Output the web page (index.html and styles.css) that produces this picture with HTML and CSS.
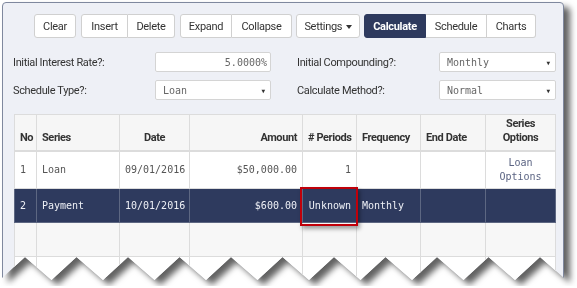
FILE: index.html
```html
<!DOCTYPE html>
<html>
<head>
<meta charset="utf-8">
<link rel="stylesheet" href="styles.css">
</head>
<body>
<div class="shot">
  <div class="panel">
    <div class="toolbar">
      <div class="group"><button class="btn w-clear">Clear</button></div>
      <div class="group"><button class="btn w-insert">Insert</button><button class="btn w-delete">Delete</button></div>
      <div class="group"><button class="btn w-expand">Expand</button><button class="btn w-collapse">Collapse</button></div>
      <div class="group"><button class="btn w-settings">Settings <span class="caret"></span></button></div>
      <div class="group"><button class="btn btn-primary w-calc">Calculate</button><button class="btn w-sched">Schedule</button><button class="btn w-charts">Charts</button></div>
    </div>

    <div class="form">
      <div class="field">
        <label class="label">Initial Interest Rate?:</label>
        <div class="input right">5.0000%</div>
      </div>
      <div class="field">
        <label class="label">Initial Compounding?:</label>
        <div class="input select wide">Monthly<span class="arrow">&#9660;</span></div>
      </div>
      <div class="field">
        <label class="label">Schedule Type?:</label>
        <div class="input select">Loan<span class="arrow">&#9660;</span></div>
      </div>
      <div class="field">
        <label class="label">Calculate Method?:</label>
        <div class="input select wide">Normal<span class="arrow">&#9660;</span></div>
      </div>
    </div>

    <table class="grid">
      <colgroup>
        <col class="c-no"><col class="c-series"><col class="c-date"><col class="c-amt">
        <col class="c-per"><col class="c-freq"><col class="c-end"><col class="c-opt">
      </colgroup>
      <thead>
        <tr>
          <th class="l">No</th>
          <th class="l">Series</th>
          <th class="c">Date</th>
          <th class="r">Amount</th>
          <th class="r"># Periods</th>
          <th class="l">Frequency</th>
          <th class="l">End Date</th>
          <th class="c">Series<br>Options</th>
        </tr>
      </thead>
      <tbody>
        <tr class="row-a row-first">
          <td class="l">1</td>
          <td class="l">Loan</td>
          <td class="c">09/01/2016</td>
          <td class="r">$50,000.00</td>
          <td class="r">1</td>
          <td></td>
          <td></td>
          <td class="c link">Loan<br>Options</td>
        </tr>
        <tr class="row-sel">
          <td class="l">2</td>
          <td class="l">Payment</td>
          <td class="c">10/01/2016</td>
          <td class="r">$600.00</td>
          <td class="r mark-cell">Unknown<span class="mark"></span></td>
          <td class="l">Monthly</td>
          <td></td>
          <td></td>
        </tr>
        <tr class="row-b"><td></td><td></td><td></td><td></td><td></td><td></td><td></td><td></td></tr>
        <tr class="row-a"><td></td><td></td><td></td><td></td><td></td><td></td><td></td><td></td></tr>
      </tbody>
    </table>
  </div>
</div>
</body>
</html>
```

FILE: styles.css
```css
html, body {
  margin: 0;
  padding: 0;
  background: #ffffff;
  overflow: hidden;
}

.shot {
  padding: 2px 0 0 2px;
  width: 562px;
  filter: drop-shadow(6px 5px 3px rgba(0, 0, 0, 0.62));
}

.panel {
  box-sizing: border-box;
  width: 562px;
  height: 284px;
  overflow: hidden;
  background: #eef0f6;
  border: 1px solid #7f889e;
  border-radius: 4px 4px 0 0;
  padding: 11px 7px 0 11px;
  font-family: Roboto, "Liberation Sans", sans-serif;
  font-size: 11px;
  color: #333;
  clip-path: polygon(0 0, 562px 0, 562px 276px, 538px 255px, 513px 278px, 486.5px 255px, 461.5px 278px, 435px 255px, 410px 278px, 383.5px 255px, 358.5px 278px, 332px 255px, 307px 278px, 280.5px 255px, 255.5px 278px, 229px 255px, 204px 278px, 177.5px 255px, 152.5px 278px, 126px 255px, 101px 278px, 74.5px 255px, 49.5px 278px, 23px 255px, 0 276px);
}

/* toolbar */
.toolbar {
  display: flex;
  gap: 5px;
  padding-left: 20px;
}
.toolbar .group:nth-child(4),
.toolbar .group:nth-child(5) {
  margin-left: -1px;
}
.group {
  display: flex;
}
.btn {
  box-sizing: border-box;
  height: 24px;
  padding: 0;
  margin: 0;
  background: #fff;
  border: 1px solid #d0d0d0;
  font-family: Roboto, "Liberation Sans", sans-serif;
  font-size: 11px;
  letter-spacing: -0.3px;
  color: #333;
  text-align: center;
}
.group .btn + .btn { border-left: none; }
.group .btn:first-child { border-radius: 3px 0 0 3px; }
.group .btn:last-child { border-radius: 0 3px 3px 0; }
.group .btn:only-child { border-radius: 3px; }

.w-clear { width: 42px; }
.w-insert { width: 47px; }
.w-delete { width: 47px; }
.w-expand { width: 52px; }
.w-collapse { width: 60px; }
.w-settings { width: 64px; }
.w-calc { width: 62px; }
.w-sched { width: 61px; }
.w-charts { width: 49px; }

.btn-primary {
  background: #2e3a5e;
  border-color: #2e3a5e;
  color: #fff;
  font-weight: bold;
}
.caret {
  display: inline-block;
  width: 0;
  height: 0;
  border-left: 3.5px solid transparent;
  border-right: 3.5px solid transparent;
  border-top: 4px solid #333;
  vertical-align: middle;
  margin-left: 1px;
}

/* form */
.form {
  display: grid;
  grid-template-columns: 258px 259px;
  column-gap: 26px;
  row-gap: 8px;
  margin-top: 14px;
  margin-left: -1px;
}
.field {
  display: flex;
  align-items: center;
  height: 20px;
}
.label {
  width: 142px;
  flex: none;
  letter-spacing: -0.35px;
  color: #333;
}
.input {
  box-sizing: border-box;
  position: relative;
  width: 116px;
  height: 20px;
  line-height: 19px;
  background: #fff;
  border: 1px solid #d4d4d4;
  border-radius: 2px;
  font-family: "DejaVu Sans Mono", "Liberation Mono", monospace;
  font-size: 10px;
  color: #666;
  padding: 0 7px;
}
.input.wide { width: 117px; }
.input.right { text-align: right; padding-right: 3px; }
.arrow {
  position: absolute;
  right: 5px;
  top: 0;
  font-size: 6px;
  color: #333;
}

/* table */
.grid {
  margin-top: 14px;
  border-collapse: collapse;
  table-layout: fixed;
  width: 541px;
  font-family: "DejaVu Sans Mono", "Liberation Mono", monospace;
  font-size: 10px;
}
.c-no { width: 22px; }
.c-series { width: 83px; }
.c-date { width: 70px; }
.c-amt { width: 113px; }
.c-per { width: 54px; }
.c-freq { width: 64px; }
.c-end { width: 65px; }
.c-opt { width: 70px; }

.grid th, .grid td {
  border: 1px solid #dcdcdc;
  padding: 0 5px;
  overflow: visible;
  white-space: nowrap;
}
.grid th {
  height: 30px;
  background: #f6f6f6;
  border-bottom: 2px solid #dcdcdc;
  font-family: Roboto, "Liberation Sans", sans-serif;
  font-weight: bold;
  font-size: 11px;
  letter-spacing: -0.4px;
  color: #333;
  vertical-align: bottom;
  padding-bottom: 5px;
  line-height: 14px;
}
.grid td {
  height: 33px;
  color: #555;
  line-height: 14px;
}
.grid tr.row-a td { background: #fff; }
.grid tr.row-first td { height: 36px; }
.grid tr.row-b td { background: #f7f7f7; }
.grid tr.row-sel td {
  background: #2e3a5e;
  color: #eef0f6;
  border-color: #5d6782;
}
.l { text-align: left; }
.c { text-align: center; }
.r { text-align: right; }
.grid td.link { color: #5a6382; }

.mark-cell { position: relative; }
.mark {
  position: absolute;
  left: -3px;
  right: -2px;
  top: -2px;
  bottom: -4px;
  border: 2px solid #c0000a;
  box-shadow: 2px 3px 4px rgba(0, 0, 0, 0.35);
  pointer-events: none;
}
```
